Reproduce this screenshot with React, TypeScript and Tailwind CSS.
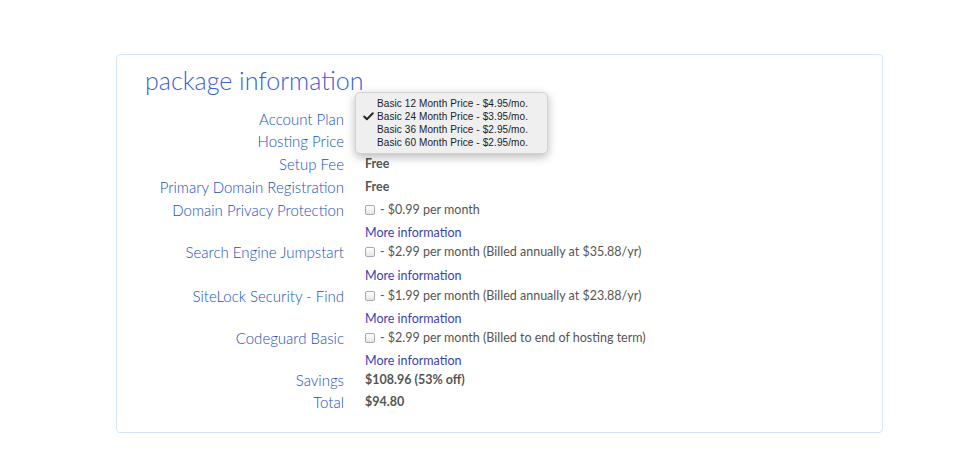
import { Check } from 'lucide-react';

const options = [
  'Basic 12 Month Price - $4.95/mo.',
  'Basic 24 Month Price - $3.95/mo.',
  'Basic 36 Month Price - $2.95/mo.',
  'Basic 60 Month Price - $2.95/mo.',
];

function Box() {
  return <span className="inline-block w-[10px] h-[10px] mr-[5px] rounded-[2px] border border-[#a9a9a9] bg-gradient-to-b from-white to-[#e6e6e6] align-[-1px]" />;
}

function Row({ label, h, children, more }: { label?: string; h: string; children?: React.ReactNode; more?: boolean }) {
  return (
    <div className={`flex items-center ${h}`}>
      <div className="w-[227px] shrink-0 text-right text-[15px] text-[#2152b8] font-light">{label}</div>
      <div className={`ml-[21px] text-[12.5px] text-[#555] ${more ? 'pt-[4px]' : ''}`}>{children}</div>
    </div>
  );
}

function More() {
  return <a className="text-[#3a3fb2]">More information</a>;
}

export default function App() {
  return (
    <div className="min-h-screen bg-white pt-[54px] pl-[116px]" style={{ fontFamily: 'Lato, "Open Sans", sans-serif' }}>
      <div className="relative w-[767px] h-[379px] border border-[#d5e5f6] rounded-[4px]">
        <h2 className="pl-[28px] pt-[8px] text-[25px] leading-[34px] text-[#3a60d6] font-light">package information</h2>

        <div className="mt-[12px]">
          <Row label="Account Plan" h="h-[21px]" />
          <Row label="Hosting Price" h="h-[23px]" />
          <Row label="Setup Fee" h="h-[23px]"><span className="font-bold">Free</span></Row>
          <Row label="Primary Domain Registration" h="h-[23px]"><span className="font-bold">Free</span></Row>
          <Row label="Domain Privacy Protection" h="h-[22px]"><Box />- $0.99 per month</Row>
          <Row h="h-[20px]" more><More /></Row>
          <Row label="Search Engine Jumpstart" h="h-[22px]"><Box />- $2.99 per month (Billed annually at $35.88/yr)</Row>
          <Row h="h-[22px]" more><More /></Row>
          <Row label="SiteLock Security - Find" h="h-[22px]"><Box />- $1.99 per month (Billed annually at $23.88/yr)</Row>
          <Row h="h-[20px]" more><More /></Row>
          <Row label="Codeguard Basic" h="h-[22px]"><Box />- $2.99 per month (Billed to end of hosting term)</Row>
          <Row h="h-[20px]" more><More /></Row>
          <Row label="Savings" h="h-[22px]"><span className="font-bold">$108.96 (53% off)</span></Row>
          <Row label="Total" h="h-[22px]"><span className="font-bold">$94.80</span></Row>
        </div>

        <div
          className="absolute left-[238px] top-[37px] w-[193px] h-[62px] rounded-[5px] bg-[#efefef] border border-[#d2d2d2] shadow-[0_3px_10px_rgba(0,0,0,0.28)] pt-[4px] text-[10px] tracking-[0.1px] leading-[13px] text-[#222]"
          style={{ fontFamily: '"Liberation Sans", Arial, sans-serif' }}
        >
          {options.map((o, i) => (
            <div key={o} className="flex items-center">
              <span className="w-[21px] flex justify-center">{i === 1 && <Check className="w-[13px] h-[13px] ml-[3px]" strokeWidth={3.5} />}</span>
              <span>{o}</span>
            </div>
          ))}
        </div>
      </div>
    </div>
  );
}
